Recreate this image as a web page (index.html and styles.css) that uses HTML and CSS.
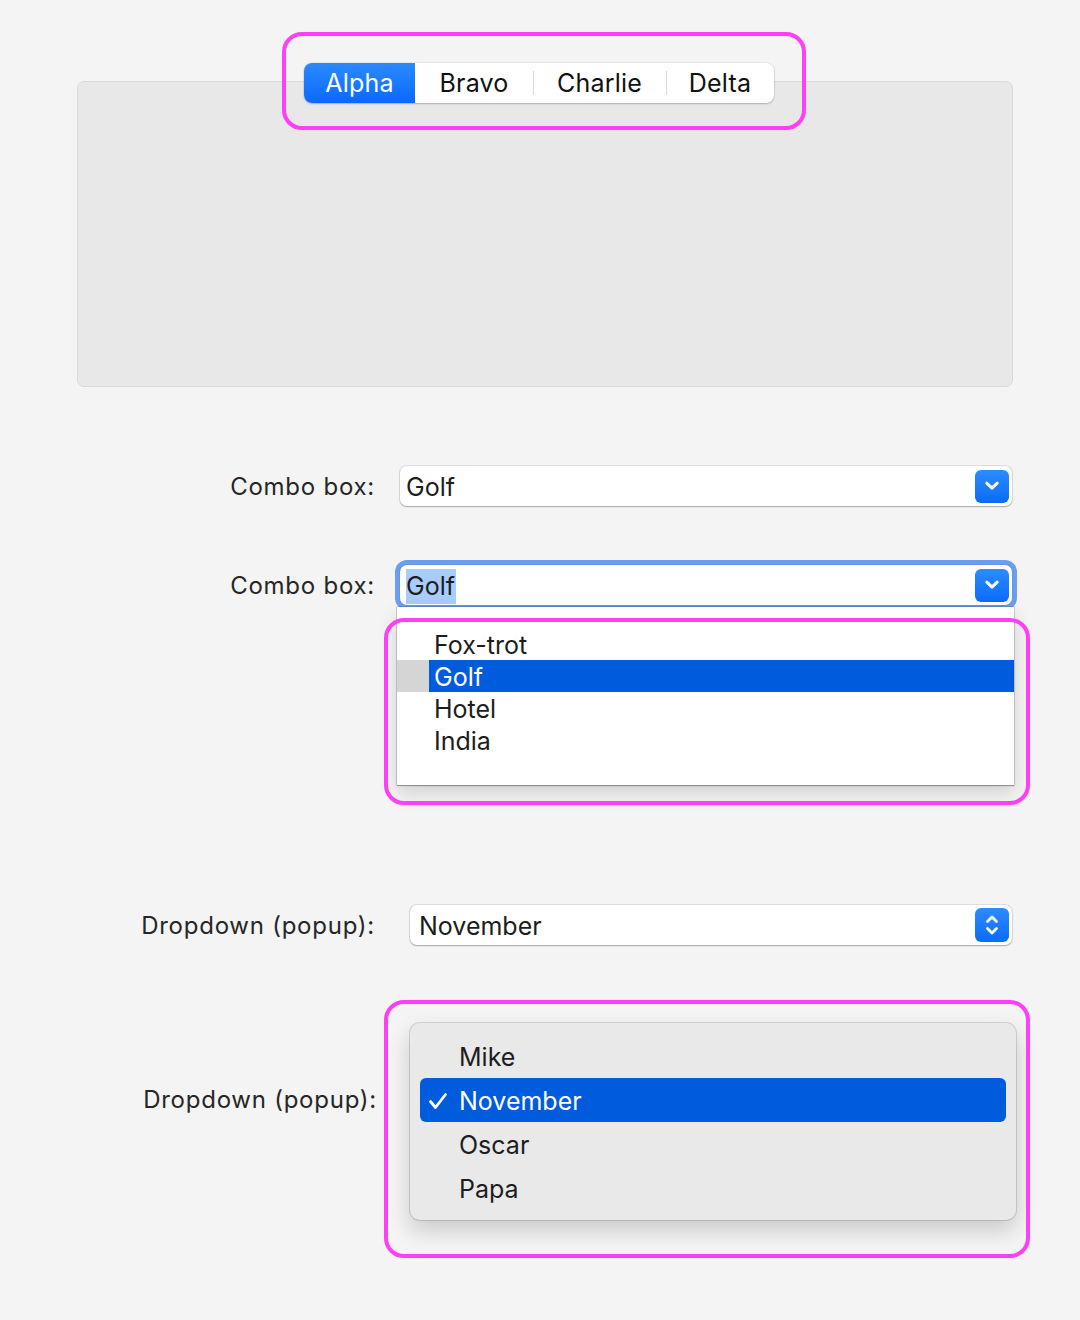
FILE: index.html
```html
<!DOCTYPE html>
<html>
<head>
<meta charset="utf-8">
<link rel="stylesheet" href="styles.css">
</head>
<body>
<div class="page">
  <div class="tabs">
    <div class="segmented hl hl-seg">
      <div class="seg seg-active">Alpha</div>
      <div class="seg">Bravo</div>
      <div class="seg seg-sep">Charlie</div>
      <div class="seg seg-sep">Delta</div>
    </div>
    <div class="panel"></div>
  </div>

  <div class="form">
    <div class="row row-combo1">
      <div class="label">Combo box:</div>
      <div class="field combo">
        <span class="value">Golf</span>
        <span class="btn">
          <svg width="16" height="12" viewBox="0 0 16 12"><path d="M2.8 3.2 L8 8.2 L13.2 3.2" fill="none" stroke="#fff" stroke-width="3" stroke-linecap="round" stroke-linejoin="round"/></svg>
        </span>
      </div>
    </div>

    <div class="row row-combo2">
      <div class="label">Combo box:</div>
      <div class="field combo focused">
        <span class="value"><span class="sel">Golf</span></span>
        <span class="btn">
          <svg width="16" height="12" viewBox="0 0 16 12"><path d="M2.8 3.2 L8 8.2 L13.2 3.2" fill="none" stroke="#fff" stroke-width="3" stroke-linecap="round" stroke-linejoin="round"/></svg>
        </span>
      </div>
    </div>

    <div class="list hl hl-list">
      <div class="li">Fox-trot</div>
      <div class="li li-sel"><span class="li-bar">Golf</span></div>
      <div class="li">Hotel</div>
      <div class="li">India</div>
    </div>

    <div class="row row-popup">
      <div class="label">Dropdown (popup):</div>
      <div class="field popup">
        <span class="value">November</span>
        <span class="btn">
          <svg width="16" height="28" viewBox="0 0 16 28"><path d="M3.5 10.5 L8 6 L12.5 10.5" fill="none" stroke="#fff" stroke-width="2.8" stroke-linecap="round" stroke-linejoin="round"/><path d="M3.5 17.5 L8 22 L12.5 17.5" fill="none" stroke="#fff" stroke-width="2.8" stroke-linecap="round" stroke-linejoin="round"/></svg>
        </span>
      </div>
    </div>

    <div class="row row-menu">
      <div class="label label-menu">Dropdown (popup):</div>
      <div class="menu hl hl-menu">
        <div class="mi">Mike</div>
        <div class="mi mi-sel"><svg class="check" width="20" height="18" viewBox="0 0 20 18"><path d="M2.5 9.5 L7.5 15.5 L17.5 2.5" fill="none" stroke="#fff" stroke-width="2.8" stroke-linecap="round" stroke-linejoin="round"/></svg>November</div>
        <div class="mi">Oscar</div>
        <div class="mi">Papa</div>
      </div>
    </div>
  </div>
</div>
</body>
</html>
```

FILE: styles.css
```css
html, body {
  margin: 0;
  padding: 0;
  background: #f4f4f4;
}
body {
  font-family: Inter, "Noto Sans", "Liberation Sans", sans-serif;
  color: #1f1f1f;
  font-size: 24px;
}
.page {
  width: 1080px;
  height: 1320px;
  overflow: hidden;
}

/* highlight annotation */
.hl { position: relative; }
.hl::after {
  content: "";
  position: absolute;
  border: 4px solid #ff3ff6;
  border-radius: 20px;
  box-sizing: border-box;
  pointer-events: none;
  z-index: 5;
}
.hl-seg::after { top: -31px; left: -22px; right: -32px; bottom: -27px; }
.hl-list::after { top: 11px; left: -13px; right: -16px; bottom: -20px; }
.hl-menu::after { top: -23px; left: -26px; right: -14px; bottom: -38px; }

/* tabs */
.tabs {
  padding-top: 63px;
}
.segmented {
  display: flex;
  width: 470px;
  height: 40px;
  margin-left: 304px;
  background: #fff;
  border-radius: 8px;
  box-shadow: 0 1px 2px rgba(0,0,0,0.22), 0 0 0 0.5px rgba(0,0,0,0.08);
  z-index: 2;
}
.seg {
  display: flex;
  align-items: center;
  justify-content: center;
  height: 40px;
  font-size: 25px;
  position: relative;
  color: #111;
  letter-spacing: 0.2px;
}
.seg:nth-child(1) { width: 111px; }
.seg:nth-child(2) { width: 118px; }
.seg:nth-child(3) { width: 133px; }
.seg:nth-child(4) { width: 108px; }
.seg-sep::before {
  content: "";
  position: absolute;
  left: 0;
  top: 8px;
  bottom: 8px;
  width: 1px;
  background: #dadada;
}
.seg-active {
  background: linear-gradient(#2b8aff, #0a69fb);
  color: #fff;
  border-radius: 8px 0 0 8px;
}
.panel {
  margin-top: -22px;
  margin-left: 77px;
  width: 936px;
  height: 306px;
  box-sizing: border-box;
  background: #e8e8e8;
  border: 1px solid #dadada;
  border-radius: 7px;
}

/* form */
.form {
  padding-top: 79px;
}
.row {
  display: flex;
  align-items: center;
}
.label {
  width: 375px;
  text-align: right;
  font-size: 24px;
  letter-spacing: 0.75px;
  color: #262626;
  flex: none;
}
.field {
  position: relative;
  display: flex;
  align-items: center;
  height: 40px;
  box-sizing: border-box;
  background: #fff;
  border-radius: 7px;
  box-shadow: 0 0 0 1px rgba(0,0,0,0.09), 0 1px 1.5px rgba(0,0,0,0.25);
  flex: none;
}
.combo {
  margin-left: 25px;
  width: 612px;
  padding-left: 6px;
}
.popup {
  margin-left: 35px;
  width: 602px;
  padding-left: 9px;
}
.value {
  flex: 1;
  font-size: 25px;
  color: #1d1d1d;
  padding-top: 2px;
}
.sel {
  background: #a8ccfc;
  padding: 2px 1px 3px 0;
}
.btn {
  width: 34px;
  height: 33px;
  margin-right: 3px;
  border-radius: 6px;
  background: linear-gradient(#2c8cff, #0b6bfd);
  display: flex;
  align-items: center;
  justify-content: center;
}
.popup .btn { height: 34px; }

.row-combo2 { margin-top: 59px; }
.focused {
  box-shadow: 0 0 0 1px rgba(0,0,0,0.06), 0 0 0 5px #6c9ef0;
}

/* combo list */
.list {
  margin-top: 2px;
  margin-left: 397px;
  width: 617px;
  height: 178px;
  box-sizing: border-box;
  background: #fff;
  padding-top: 21px;
  box-shadow: 0 0 0 0.5px rgba(0,0,0,0.25), 0 1px 1px rgba(0,0,0,0.25), 0 8px 18px rgba(0,0,0,0.15);
  z-index: 3;
}
.li {
  height: 32px;
  line-height: 34px;
  padding-left: 37px;
  font-size: 25px;
  color: #1d1d1d;
}
.li-sel {
  padding-left: 32px;
  background: #d5d5d5;
  display: flex;
}
.li-bar {
  flex: 1;
  background: #005bdd;
  color: #fff;
  padding-left: 5px;
}

/* popup */
.row-popup { margin-top: 120px; }
.row-menu {
  margin-top: 78px;
  align-items: flex-start;
}
.label-menu {
  margin-top: 62px;
  width: 377px;
}
.menu {
  margin-left: 33px;
  width: 606px;
  height: 197px;
  box-sizing: border-box;
  background: #e9e9e9;
  border-radius: 10px;
  padding: 11px 10px 10px;
  box-shadow: 0 0 0 1px rgba(0,0,0,0.13), 0 10px 22px rgba(0,0,0,0.18);
}
.mi {
  height: 44px;
  display: flex;
  align-items: center;
  padding-left: 39px;
  padding-top: 2px;
  box-sizing: border-box;
  font-size: 25px;
  color: #1d1d1d;
  border-radius: 6px;
  position: relative;
}
.mi-sel {
  background: #005bdd;
  color: #fff;
}
.check {
  position: absolute;
  left: 8px;
  top: 14px;
}
```
